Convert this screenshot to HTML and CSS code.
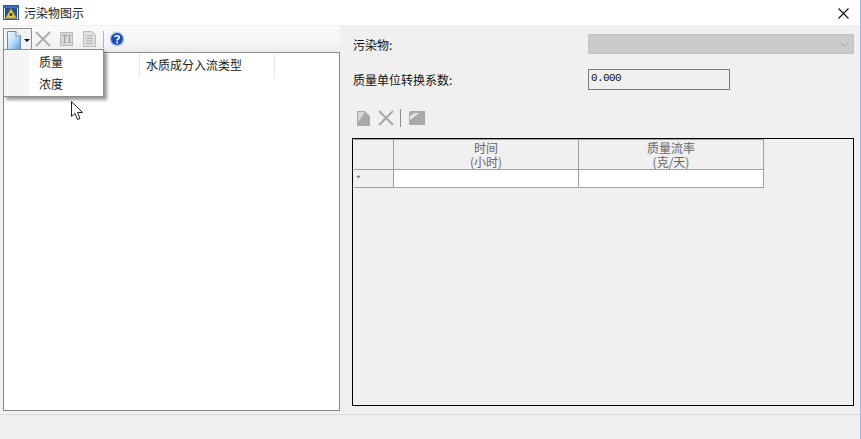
FILE: index.html
```html
<!DOCTYPE html>
<html lang="zh">
<head>
<meta charset="utf-8">
<title>污染物图示</title>
<link rel="stylesheet" href="styles.css">
</head>
<body>
<div class="window">
  <header class="titlebar">
    <svg class="appicon" width="16" height="15" viewBox="0 0 16 15">
      <rect x="0.5" y="0.5" width="15" height="14" fill="#dfe7f2" stroke="#2c57a6"/>
      <rect x="1" y="1" width="14" height="2" fill="#3a6fc4"/>
      <rect x="2" y="3" width="12" height="10.5" fill="#2a4f8f"/>
      <path d="M8 3.5 L13.5 13 H2.5 Z" fill="#e8cf3a" stroke="#8a7428" stroke-width="0.7"/>
      <circle cx="8" cy="9.5" r="1.5" fill="#3a3a2a"/>
    </svg>
    <span class="title">污染物图示</span>
    <svg class="close" width="11" height="11" viewBox="0 0 11 11"><path d="M0.5 0.5 L10.5 10.5 M10.5 0.5 L0.5 10.5" stroke="#111" stroke-width="1.1" fill="none"/></svg>
  </header>
  <main class="main">
    <section class="left">
      <div class="toolbar">
        <div class="dropbtn">
          <svg width="14" height="19" viewBox="0 0 14 19">
            <defs><linearGradient id="pg" x1="1" y1="1" x2="0" y2="0"><stop offset="0" stop-color="#4f9fe8"/><stop offset="0.5" stop-color="#bcdcf8"/><stop offset="1" stop-color="#f4f9fe"/></linearGradient></defs>
            <path d="M0.5 0.5 H9 L13.5 5 V18.5 H0.5 Z" fill="url(#pg)" stroke="#6f8bb4"/>
            <path d="M9 0.5 V5 H13.5" fill="#fff" stroke="#6f8bb4"/>
          </svg>
          <span class="caret"></span>
        </div>
        <svg class="tool" width="16" height="16" viewBox="0 0 16 16"><path d="M1 1 L15 15 M15 1 L1 15" stroke="#b0b0b0" stroke-width="2" fill="none"/></svg>
        <svg class="tool tool-t" width="13" height="14" viewBox="0 0 13 14"><rect x="0.5" y="0.5" width="12" height="13" fill="#d8d8d8" stroke="#bbb"/><path d="M2.5 3.5 H7 M4.7 3.5 V10.5 M3.5 10.5 H6 M9.5 3.5 V10.5 M8.5 3.5 H10.5 M8.5 10.5 H10.5" stroke="#9a9a9a" fill="none"/></svg>
        <svg class="tool tool-d" width="13" height="16" viewBox="0 0 13 16"><path d="M0.5 0.5 H9 L12.5 4 V15.5 H0.5 Z" fill="#e0e0e0" stroke="#bbb"/><path d="M3 5 H10 M3 7.5 H10 M3 10 H10 M3 12.5 H10" stroke="#b0b0b0" fill="none"/></svg>
        <span class="sep"></span>
        <svg class="help" width="16" height="16" viewBox="0 0 16 16">
          <circle cx="8" cy="8" r="7.5" fill="#b9cfe8"/><circle cx="8" cy="8" r="6" fill="#1b4fb5"/>
          <path d="M5.8 6.2 C6 4.4 10.4 4.2 10.3 6.5 C10.2 8 8.2 8 8 9.6" stroke="#fff" stroke-width="1.6" fill="none"/><rect x="7.1" y="10.6" width="1.8" height="1.8" fill="#fff"/>
        </svg>
      </div>
      <div class="listbox">
        <div class="listhead">
          <div class="lh-col lh-first"></div>
          <div class="lh-col lh-second">水质成分入流类型</div>
        </div>
      </div>
      <nav class="menu">
        <div class="menu-item">质量</div>
        <div class="menu-item">浓度</div>
      </nav>
      <svg class="cursor" width="13" height="20" viewBox="0 0 13 20"><path d="M0.5 0.5 V15.5 L4 12.5 L6.5 18.5 L9 17.5 L6.5 11.5 H11.5 Z" fill="#fff" stroke="#222"/></svg>
    </section>
    <section class="right">
      <div class="field field-combo">
        <label class="lbl">污染物:</label>
        <div class="combo"><svg width="9" height="5" viewBox="0 0 9 5"><path d="M0.5 0.5 L4.5 4.5 L8.5 0.5" stroke="#a0a0a0" fill="none"/></svg></div>
      </div>
      <div class="field field-factor">
        <label class="lbl">质量单位转换系数:</label>
        <div class="input">0.000</div>
      </div>
      <div class="subtools">
        <svg width="13" height="15" viewBox="0 0 13 15"><path d="M0 0 H8 L13 5 V15 H0 Z" fill="#a9a9a9"/><path d="M8 0 H9 L13 4 V5 Z" fill="#eee"/><path d="M1 11 V1 H8 Z" fill="#d6d6d6"/></svg>
        <svg width="16" height="16" viewBox="0 0 16 16"><path d="M1 1 L15 15 M15 1 L1 15" stroke="#a9a9a9" stroke-width="2" fill="none"/></svg>
        <span class="subsep"></span>
        <svg width="16" height="14" viewBox="0 0 16 14"><path d="M1.5 0 H16 V14 H0 V1.5 Z" fill="#a9a9a9"/><path d="M1 9 V5 L6 2 H10 Z" fill="#e9e9e9"/></svg>
      </div>
      <div class="gridbox">
        <div class="grid">
          <div class="cell head corner"></div>
          <div class="cell head col"><span class="l1">时间</span><span class="l2">(小时)</span></div>
          <div class="cell head col"><span class="l1">质量流率</span><span class="l2">(克/天)</span></div>
          <div class="cell rowhead">*</div>
          <div class="cell data"></div>
          <div class="cell data"></div>
        </div>
      </div>
    </section>
  </main>
  <footer class="status"></footer>
</div>
</body>
</html>
```
FILE: styles.css
```css
* { box-sizing: border-box; }
html, body { margin: 0; padding: 0; }
body {
  width: 861px;
  height: 439px;
  overflow: hidden;
  background: #f0f0f0;
  font-family: "Noto Sans CJK SC", "Liberation Sans", sans-serif;
  font-size: 12px;
  color: #111;
}
.window {
  width: 861px;
  height: 439px;
  display: flex;
  flex-direction: column;
  border-right: 1px solid #8cbcea;
}
.titlebar {
  height: 25px;
  background: #fff;
  display: flex;
  align-items: center;
  padding: 0 11px 0 3px;
  flex: none;
}
.appicon { margin-bottom: 1px; }
.title { margin-left: 5px; font-size: 12px; color: #222; flex: 1; }
.close { margin-top: 2px; }
.main {
  flex: 1;
  display: flex;
  min-height: 0;
  padding-left: 3px;
}
.left {
  position: relative;
  flex: none;
  width: 337px;
  height: 386px;
  display: flex;
  flex-direction: column;
}
.toolbar {
  height: 26px;
  flex: none;
  display: flex;
  align-items: center;
  margin-top: 1px;
  margin-left: -3px;
  padding-left: 3px;
  background: linear-gradient(#fafafa, #f5f5f5 60%, #ececec);
}
.dropbtn {
  width: 29px;
  height: 24px;
  margin-top: 2px;
  border: 1px solid #8a8f96;
  border-bottom: 0;
  background: #f2f2f2;
  display: flex;
  align-items: center;
  padding-left: 3px;
  gap: 3px;
}
.caret {
  width: 0;
  height: 0;
  border-left: 3px solid transparent;
  border-right: 3px solid transparent;
  border-top: 3px solid #111;
}
.tool { flex: none; }
.dropbtn + .tool { margin-left: 3px; }
.tool-t { margin-left: 9px; }
.tool-d { margin-left: 10px; }
.sep { width: 1px; height: 17px; background: #b5b5b5; margin: 0 5px 0 7px; }
.help { flex: none; }
.listbox {
  flex: 1;
  background: #fff;
  border: 1px solid #82878c;
  border-top: 1px solid #8a8f96;
  padding-top: 1px;
}
.listhead { display: flex; height: 24px; align-items: stretch; }
.lh-col { border-right: 1px solid #e6e6e6; line-height: 22px; color: #222; }
.lh-first { width: 136px; }
.lh-second { width: 135px; padding-left: 6px; font-size: 12px; white-space: nowrap; }
.menu {
  position: absolute;
  left: 0;
  top: 24px;
  width: 101px;
  height: 48px;
  background: linear-gradient(90deg, #f5f5f5 25px, #fff 25px);
  border: 1px solid #8a8f96;
  box-shadow: 3px 3px 3px rgba(0, 0, 0, 0.4);
  padding: 1px 0 0 35px;
}
.menu-item { height: 22px; line-height: 22px; font-size: 12px; color: #222; }
.cursor { position: absolute; left: 68px; top: 76px; }
.right {
  flex: none;
  width: 520px;
  margin-left: 12px;
  display: flex;
  flex-direction: column;
}
.field { display: flex; align-items: center; }
.lbl { width: 236px; font-size: 12px; color: #111; flex: none; padding-left: 1px; }
.field-combo { margin-top: 9px; height: 20px; }
.combo {
  width: 266px;
  height: 20px;
  background: #cacaca;
  border: 1px solid #c2c2c2;
  display: flex;
  align-items: center;
  justify-content: flex-end;
  padding-right: 4px;
}
.field-factor { margin-top: 15px; height: 21px; }
.input {
  width: 142px;
  height: 21px;
  background: #f0f0f0;
  border: 1px solid #7a7a7a;
  font-family: "Liberation Mono", "DejaVu Sans Mono", monospace;
  font-size: 11px;
  letter-spacing: -0.6px;
  line-height: 16px;
  padding-left: 2px;
  color: #111;
}
.subtools {
  margin-top: 18px;
  height: 20px;
  display: flex;
  align-items: center;
  padding-left: 5px;
}
.subtools svg + svg { margin-left: 8px; }
.subsep { width: 1px; height: 18px; background: #8c8c8c; margin: 0 8px 0 6px; }
.gridbox {
  margin-top: 10px;
  width: 502px;
  height: 268px;
  border: 1px solid #000;
  padding: 0 0 0 1px;
}
.grid {
  display: grid;
  grid-template-columns: 40px 185px 184px;
  grid-template-rows: 30px 17px;
  width: 410px;
  border-right: 1px solid #a0a0a0;
  border-bottom: 1px solid #a0a0a0;
  border-top: 1px solid #a0a0a0;
}
.cell { border-right: 1px solid #a0a0a0; }
.cell:nth-child(3n) { border-right: 0; }
.head {
  background: #f0f0f0;
  border-bottom: 1px solid #a0a0a0;
}
.col {
  display: flex;
  flex-direction: column;
  align-items: center;
  padding-top: 1px;
  font-size: 12px;
  line-height: 14px;
  color: #666;
}
.l1, .l2 { height: 14px; }
.rowhead {
  background: #f0f0f0;
  font-size: 10px;
  line-height: 17px;
  padding-left: 2px;
  color: #667;
}
.data { background: #fff; }
.status {
  height: 25px;
  flex: none;
  background: #f0f0f0;
  border-top: 1px solid #dadada;
}
```
